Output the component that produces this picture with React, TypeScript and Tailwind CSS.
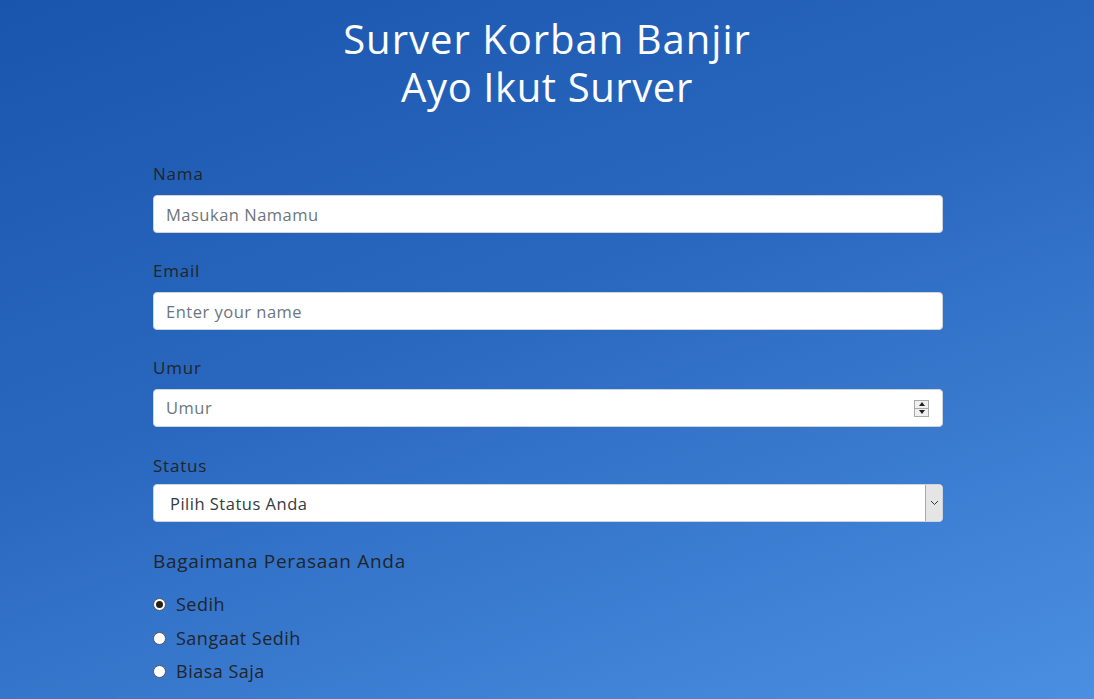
import { useState } from 'react';

const fields = [
  { label: 'Nama', placeholder: 'Masukan Namamu', type: 'text' },
  { label: 'Email', placeholder: 'Enter your name', type: 'email' },
];

const moods = ['Sedih', 'Sangaat Sedih', 'Biasa Saja'];

const App = () => {
  const [mood, setMood] = useState('Sedih');

  return (
    <div className="min-h-[699px] w-full bg-[linear-gradient(160deg,#1a55ad_0%,#2a68bf_45%,#4a8fe2_100%)] font-['Open_Sans',sans-serif] text-[#212529]">
      {/* Header */}
      <h1 className="pt-[15px] text-center text-[40px] leading-[48px] text-white">
        <span className="font-medium tracking-[1px]">Surver Korban Banjir</span>
        <br />
        <span className="font-normal tracking-[0.6px]">Ayo Ikut Surver</span>
      </h1>

      {/* Form */}
      <form className="ml-[153px] mt-[51px] w-[790px]">
        {fields.map((f) => (
          <div key={f.label} className="mb-[26px]">
            <label className="mb-[9px] block text-[17px] leading-[24px] font-medium tracking-[0.8px]">{f.label}</label>
            <input
              type={f.type}
              placeholder={f.placeholder}
              className="block h-[38px] w-full rounded-[4px] border border-[#ced4da] bg-white px-3 text-[16.5px] tracking-[0.5px] text-[#495057] outline-none placeholder:text-[#6c757d]"
            />
          </div>
        ))}

        <div className="mb-[27px]">
          <label className="mb-[9px] block text-[17px] leading-[24px] font-medium tracking-[0.8px]">Umur</label>
          <div className="flex h-[38px] w-full items-center rounded-[4px] border border-[#ced4da] bg-white pl-3 pr-[13px]">
            <input
              type="text"
              placeholder="Umur"
              className="flex-1 bg-transparent text-[16.5px] tracking-[0.5px] text-[#495057] outline-none placeholder:text-[#6c757d]"
            />
            <div className="flex h-[17px] w-[15px] flex-col border border-[#a9a9a9] bg-[#f0f0f0]">
              <div className="flex flex-1 items-center justify-center border-b border-[#a9a9a9]">
                <div className="h-0 w-0 border-x-[3px] border-b-[4px] border-x-transparent border-b-[#222]" />
              </div>
              <div className="flex flex-1 items-center justify-center">
                <div className="h-0 w-0 border-x-[3px] border-t-[4px] border-x-transparent border-t-[#222]" />
              </div>
            </div>
          </div>
        </div>

        <div className="mb-[26px]">
          <label className="mb-[6px] block text-[17px] leading-[24px] font-medium tracking-[0.8px]">Status</label>
          <div className="flex h-[38px] w-full rounded-[4px] border border-[#ced4da] bg-white">
            <div className="flex flex-1 items-end pb-[4px] pl-4 text-[16.5px] tracking-[0.5px] text-[#343a40]">Pilih Status Anda</div>
            <div className="flex w-[17px] items-center justify-center rounded-r-[3px] border-l border-[#a9a9a9] bg-[#e5e5e5]">
              <svg width="9" height="6" viewBox="0 0 9 6" fill="none" stroke="#333" strokeWidth="1">
                <path d="M1 1l3.5 3.5L8 1" />
              </svg>
            </div>
          </div>
        </div>

        <p className="mb-[17px] text-[19px] leading-[27px] font-medium tracking-[0.7px]">Bagaimana Perasaan Anda</p>

        <div className="flex flex-col gap-[8.5px]">
          {moods.map((m) => (
            <label key={m} className="flex items-center gap-[10px] text-[18px] leading-[25px] font-medium tracking-[0.5px]">
              <span className="flex h-[13px] w-[13px] items-center justify-center rounded-full border border-[#555] bg-white">
                {mood === m && <span className="h-[7px] w-[7px] rounded-full bg-[#222]" />}
              </span>
              <input type="radio" name="mood" className="hidden" checked={mood === m} onChange={() => setMood(m)} />
              {m}
            </label>
          ))}
        </div>
      </form>
    </div>
  );
};

export default App;
